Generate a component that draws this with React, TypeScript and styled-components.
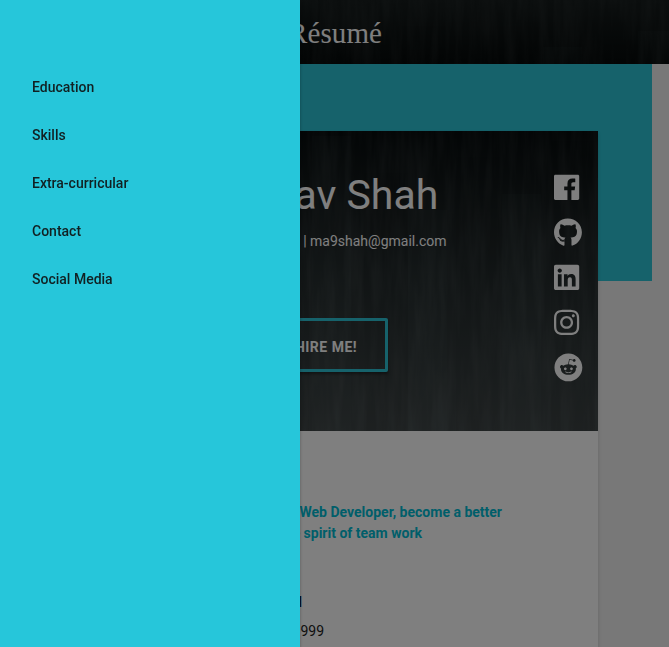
import React from "react";
import styled, { createGlobalStyle } from "styled-components";
import { FaGithub, FaLinkedin, FaInstagram, FaReddit } from "react-icons/fa";

const GlobalStyle = createGlobalStyle`
  *, *::before, *::after { box-sizing: border-box; }
  html, body, #root { height: 100%; }
  body { margin: 0; overflow: hidden; font-family: Roboto, sans-serif; background: #f0f0f0; }
`;

const Page = styled.div`
  height: 647px;
  overflow: hidden;
  background: #f0f0f0;
`;

const Header = styled.header`
  position: relative;
  display: flex;
  align-items: center;
  height: 64px;
  padding-left: 288px;
  background: linear-gradient(#161c1c, #060a0a);
`;

const Texture = styled.svg`
  position: absolute;
  inset: 0;
  width: 100%;
  height: 100%;
`;

const HeaderTitle = styled.h1`
  position: relative;
  margin: 0;
  padding-top: 2px;
  font: 400 29px/32px "Liberation Serif", serif;
  letter-spacing: 0.1px;
  color: #fff;
`;

const Main = styled.main`
  width: 652px;
  height: 217px;
  padding: 67px 54px 0;
  background: #2cc5d7;
`;

const Card = styled.article`
  height: 600px;
  background: #fff;
  box-shadow: 0 2px 4px rgba(0, 0, 0, 0.16);
`;

const Hero = styled.section`
  position: relative;
  display: flex;
  flex-direction: column;
  align-items: center;
  height: 300px;
  color: #fff;
  background: linear-gradient(#070c0d, #252c2d 50%, #3d4445);
`;

const Name = styled.h2`
  position: relative;
  margin: 40px 0 0;
  font-weight: 400;
  font-size: 41px;
  line-height: 48px;
`;

const Details = styled.p`
  position: relative;
  width: 241px;
  margin: 12px 0 0;
  text-align: right;
  white-space: nowrap;
  font-size: 14px;
  line-height: 20px;
`;

const HireButton = styled.button`
  position: relative;
  width: 124px;
  height: 54px;
  margin-top: 67px;
  padding: 3px 0 0;
  border: 3px solid #2cc5d7;
  border-radius: 2px;
  background: transparent;
  color: #fff;
  font: 700 14px Roboto, sans-serif;
  letter-spacing: 0.5px;
  box-shadow: 0 2px 3px rgba(0, 0, 0, 0.4);
`;

const Social = styled.nav`
  position: absolute;
  top: 42px;
  right: 15px;
  display: grid;
  grid-auto-rows: 45px;
  justify-items: start;
  width: 29px;

  svg { display: block; height: 28.8px; width: 28.8px; }
`;

const Objective = styled.div`
  padding-top: 71px;
  color: #00bcd4;
  font-weight: 700;
  font-size: 14px;
  line-height: 21px;
`;

const Line = styled.p<{ $width: number }>`
  width: ${({ $width }) => $width}px;
  margin: 0;
  text-align: right;
  white-space: nowrap;
`;

const Facts = styled.div`
  padding-top: 44px;
  color: #212121;
  font-size: 14px;
  line-height: 29px;
`;

const Accent = styled.b`
  color: #001c40;
`;

const Scrim = styled.div`
  position: fixed;
  inset: 0;
  background: rgba(0, 0, 0, 0.5);
`;

const Drawer = styled.aside`
  position: fixed;
  top: 0;
  left: 0;
  width: 300px;
  height: 100%;
  padding-top: 63px;
  background: #26c6da;
  box-shadow: 0 2px 3px rgba(0, 0, 0, 0.3);
`;

const DrawerLink = styled.a`
  display: block;
  padding-left: 32px;
  color: #112022;
  font-weight: 500;
  font-size: 14px;
  line-height: 48px;
`;

function Wood({ id, strength }: { id: string; strength: number }) {
  return (
    <Texture aria-hidden="true">
      <filter id={id} x="0" y="0" width="100%" height="100%">
        <feTurbulence type="fractalNoise" baseFrequency="0.11 0.012" numOctaves={4} seed={8} />
        <feColorMatrix values="0 0 0 0 .5  0 0 0 0 .55  0 0 0 0 .55  1.2 0 0 0 -.42" />
      </filter>
      <rect width="100%" height="100%" filter={`url(#${id})`} opacity={strength} />
      {[28, 72, 119, 163, 211, 258, 310, 354, 402, 448, 497, 543, 592, 638].map((x, i) => (
        <rect key={x} x={x} y={(i * 37) % 90} width={i % 2 ? 39 : 44} height="300" fill={i % 2 ? "#829091" : "#000"} opacity="0.03" />
      ))}
    </Texture>
  );
}

function FacebookIcon() {
  return (
    <svg viewBox="0 0 448 512" fill="currentColor" preserveAspectRatio="xMinYMid meet">
      <path d="M448 56.7v398.5c0 13.7-11.1 24.7-24.7 24.7H309.1V306.5h58.2l8.7-67.6h-67v-43.2c0-19.6 5.4-32.9 33.5-32.9h35.8v-60.5c-6.2-.8-27.4-2.7-52.2-2.7-51.6 0-87 31.5-87 89.4v49.9h-58.4v67.6h58.4V480H24.7C11.1 480 0 468.9 0 455.3V56.7C0 43.1 11.1 32 24.7 32h398.5c13.7 0 24.8 11.1 24.8 24.7z" />
    </svg>
  );
}

const brandIcons = [FaGithub, FaLinkedin, FaInstagram, FaReddit];

const links = ["Education", "Skills", "Extra-curricular", "Contact", "Social Media"];

export default function App() {
  return (
    <Page>
      <GlobalStyle />
      <Header>
        <Wood id="header-wood" strength={0.11} />
        <HeaderTitle>Résumé</HeaderTitle>
      </Header>
      <Main>
        <Card>
          <Hero>
            <Wood id="hero-wood" strength={0.13} />
            <Name>Manav Shah</Name>
            <Details>| ma9shah@gmail.com</Details>
            <HireButton>HIRE ME!</HireButton>
            <Social>
              <FacebookIcon />
              {brandIcons.map((Icon, i) => (
                <Icon key={i} preserveAspectRatio="xMinYMid meet" />
              ))}
            </Social>
          </Hero>
          <Objective>
            <Line $width={448}>Web Developer, become a better</Line>
            <Line $width={368}>the spirit of team work</Line>
          </Objective>
          <Facts>
            <Line $width={248}><Accent>d</Accent></Line>
            <Line $width={270}>999</Line>
          </Facts>
        </Card>
      </Main>
      <Scrim />
      <Drawer>
        {links.map((label) => <DrawerLink key={label}>{label}</DrawerLink>)}
      </Drawer>
    </Page>
  );
}
